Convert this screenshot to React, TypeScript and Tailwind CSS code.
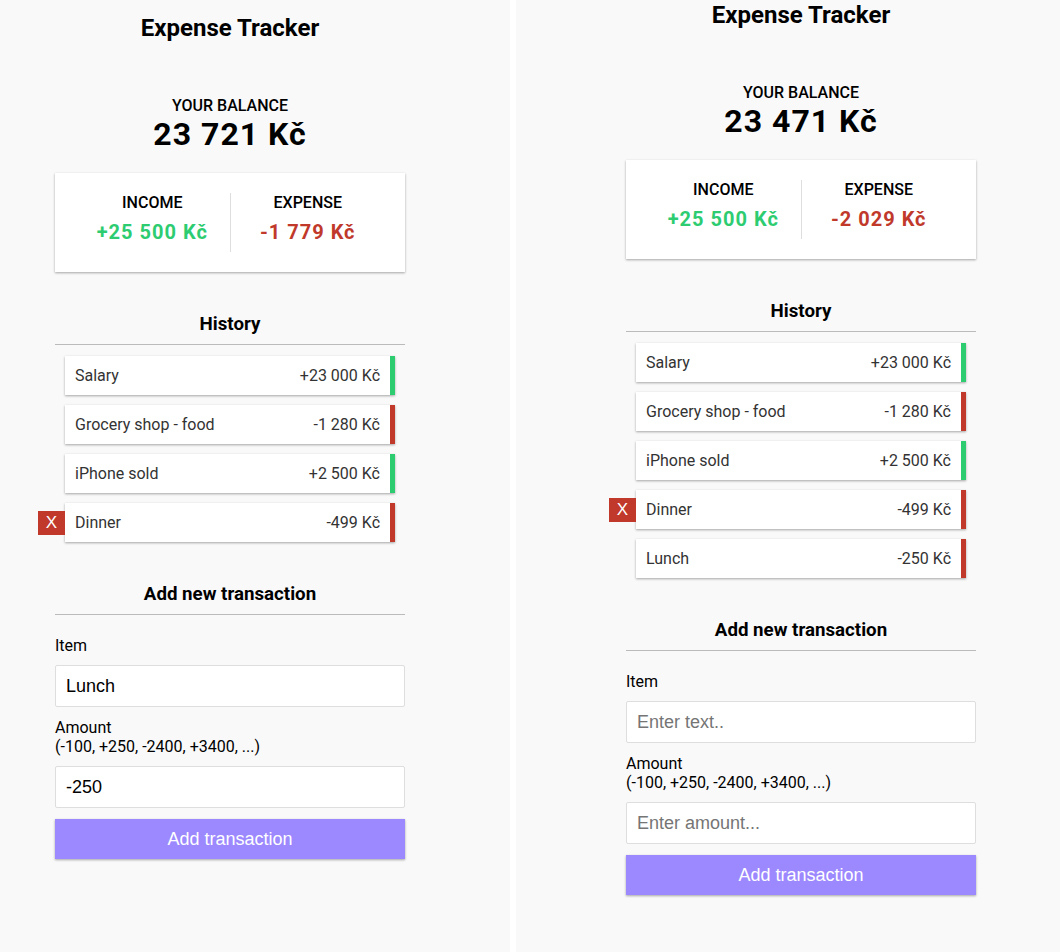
import React from "react";

type Tx = { text: string; amount: string; plus: boolean; del?: boolean };

const shadow = "shadow-[0_1px_3px_rgba(0,0,0,0.12),0_1px_2px_rgba(0,0,0,0.24)]";

function Panel({
  balance,
  income,
  expense,
  items,
  itemValue,
  amountValue,
  top,
  left,
  width,
}: {
  balance: string;
  income: string;
  expense: string;
  items: Tx[];
  itemValue: string;
  amountValue: string;
  top: string;
  left: string;
  width: string;
}) {
  return (
    <div className={`${width} ${top} ${left} h-[952px] bg-[#f9f9f9] font-['Roboto',sans-serif] text-black`}>
      <div className="w-[350px] flex flex-col">
        <div className="h-[28px] leading-[28px] text-[24px] font-bold text-center">Expense Tracker</div>
        <div className="mt-[54px] h-[19px] leading-[19px] text-[16px] font-medium text-center uppercase">Your Balance</div>
        <div className="h-[38px] leading-[38px] text-[32px] font-bold text-center tracking-[1px]">{balance}</div>
        <div className={`mt-[20px] h-[99px] bg-white p-[20px] flex ${shadow}`}>
          <div className="flex-1 text-center border-r border-[#dedede]">
            <div className="h-[19px] leading-[19px] text-[16px] font-medium uppercase">Income</div>
            <div className="mt-[9px] leading-[23px] text-[20px] font-bold tracking-[1px] text-[#2ecc71]">{income}</div>
          </div>
          <div className="flex-1 text-center">
            <div className="h-[19px] leading-[19px] text-[16px] font-medium uppercase">Expense</div>
            <div className="mt-[9px] leading-[23px] text-[20px] font-bold tracking-[1px] text-[#c0392b]">{expense}</div>
          </div>
        </div>
        <div className="mt-[41px] h-[21px] leading-[21px] text-[18.72px] font-bold text-center pt-[1px] pb-[9px] border-b border-[#bbb] box-content">History</div>
        <ul className="mt-[11px] px-[10px] flex flex-col gap-[10px]">
          {items.map((t, i) => (
            <li
              key={i}
              className={`relative h-[39px] bg-white px-[10px] flex items-center justify-between text-[16px] text-[#333] border-r-[5px] ${
                t.plus ? "border-[#2ecc71]" : "border-[#c0392b]"
              } ${shadow}`}
            >
              {t.del && (
                <span className="absolute left-[-27px] top-1/2 -translate-y-1/2 w-[27px] h-[24px] bg-[#c0392b] text-white flex items-center justify-center text-[17px] font-['Liberation_Sans',Arial,sans-serif]">
                  X
                </span>
              )}
              <span>{t.text}</span>
              <span>{t.amount}</span>
            </li>
          ))}
        </ul>
        <div className="mt-[41px] h-[21px] leading-[21px] text-[18.72px] font-bold text-center pt-[1px] pb-[9px] border-b border-[#bbb] box-content">
          Add new transaction
        </div>
        <div className="mt-[21px] h-[19px] leading-[19px] text-[16px]">Item</div>
        <input
          readOnly
          value={itemValue}
          placeholder="Enter text.."
          className="mt-[10px] h-[42px] w-full bg-white border border-[#dedede] rounded-[2px] px-[10px] text-[18px] text-black font-['Liberation_Sans',Arial,sans-serif] placeholder:text-[#757575] outline-none"
        />
        <div className="mt-[11px] leading-[19px] text-[16px]">
          Amount
          <br />
          (-100, +250, -2400, +3400, ...)
        </div>
        <input
          readOnly
          value={amountValue}
          placeholder="Enter amount..."
          className="mt-[10px] h-[42px] w-full bg-white border border-[#dedede] rounded-[2px] px-[10px] text-[18px] text-black font-['Liberation_Sans',Arial,sans-serif] placeholder:text-[#757575] outline-none"
        />
        <button
          className={`mt-[11px] h-[40px] w-full bg-[#9c88ff] text-white text-[18px] font-['Liberation_Sans',Arial,sans-serif] ${shadow}`}
        >
          Add transaction
        </button>
      </div>
    </div>
  );
}

export default function App() {
  const base: Tx[] = [
    { text: "Salary", amount: "+23 000 Kč", plus: true },
    { text: "Grocery shop - food", amount: "-1 280 Kč", plus: false },
    { text: "iPhone sold", amount: "+2 500 Kč", plus: true },
    { text: "Dinner", amount: "-499 Kč", plus: false, del: true },
  ];
  return (
    <div className="flex w-[1060px] h-[952px] overflow-hidden bg-white">
      <Panel
        width="w-[510px]"
        top="pt-[14px]"
        left="pl-[55px]"
        balance="23 721 Kč"
        income="+25 500 Kč"
        expense="-1 779 Kč"
        items={base}
        itemValue="Lunch"
        amountValue="-250"
      />
      <div className="w-[6px] h-[952px] bg-white" />
      <Panel
        width="w-[544px]"
        top="pt-[1px]"
        left="pl-[110px]"
        balance="23 471 Kč"
        income="+25 500 Kč"
        expense="-2 029 Kč"
        items={[...base, { text: "Lunch", amount: "-250 Kč", plus: false }]}
        itemValue=""
        amountValue=""
      />
    </div>
  );
}
